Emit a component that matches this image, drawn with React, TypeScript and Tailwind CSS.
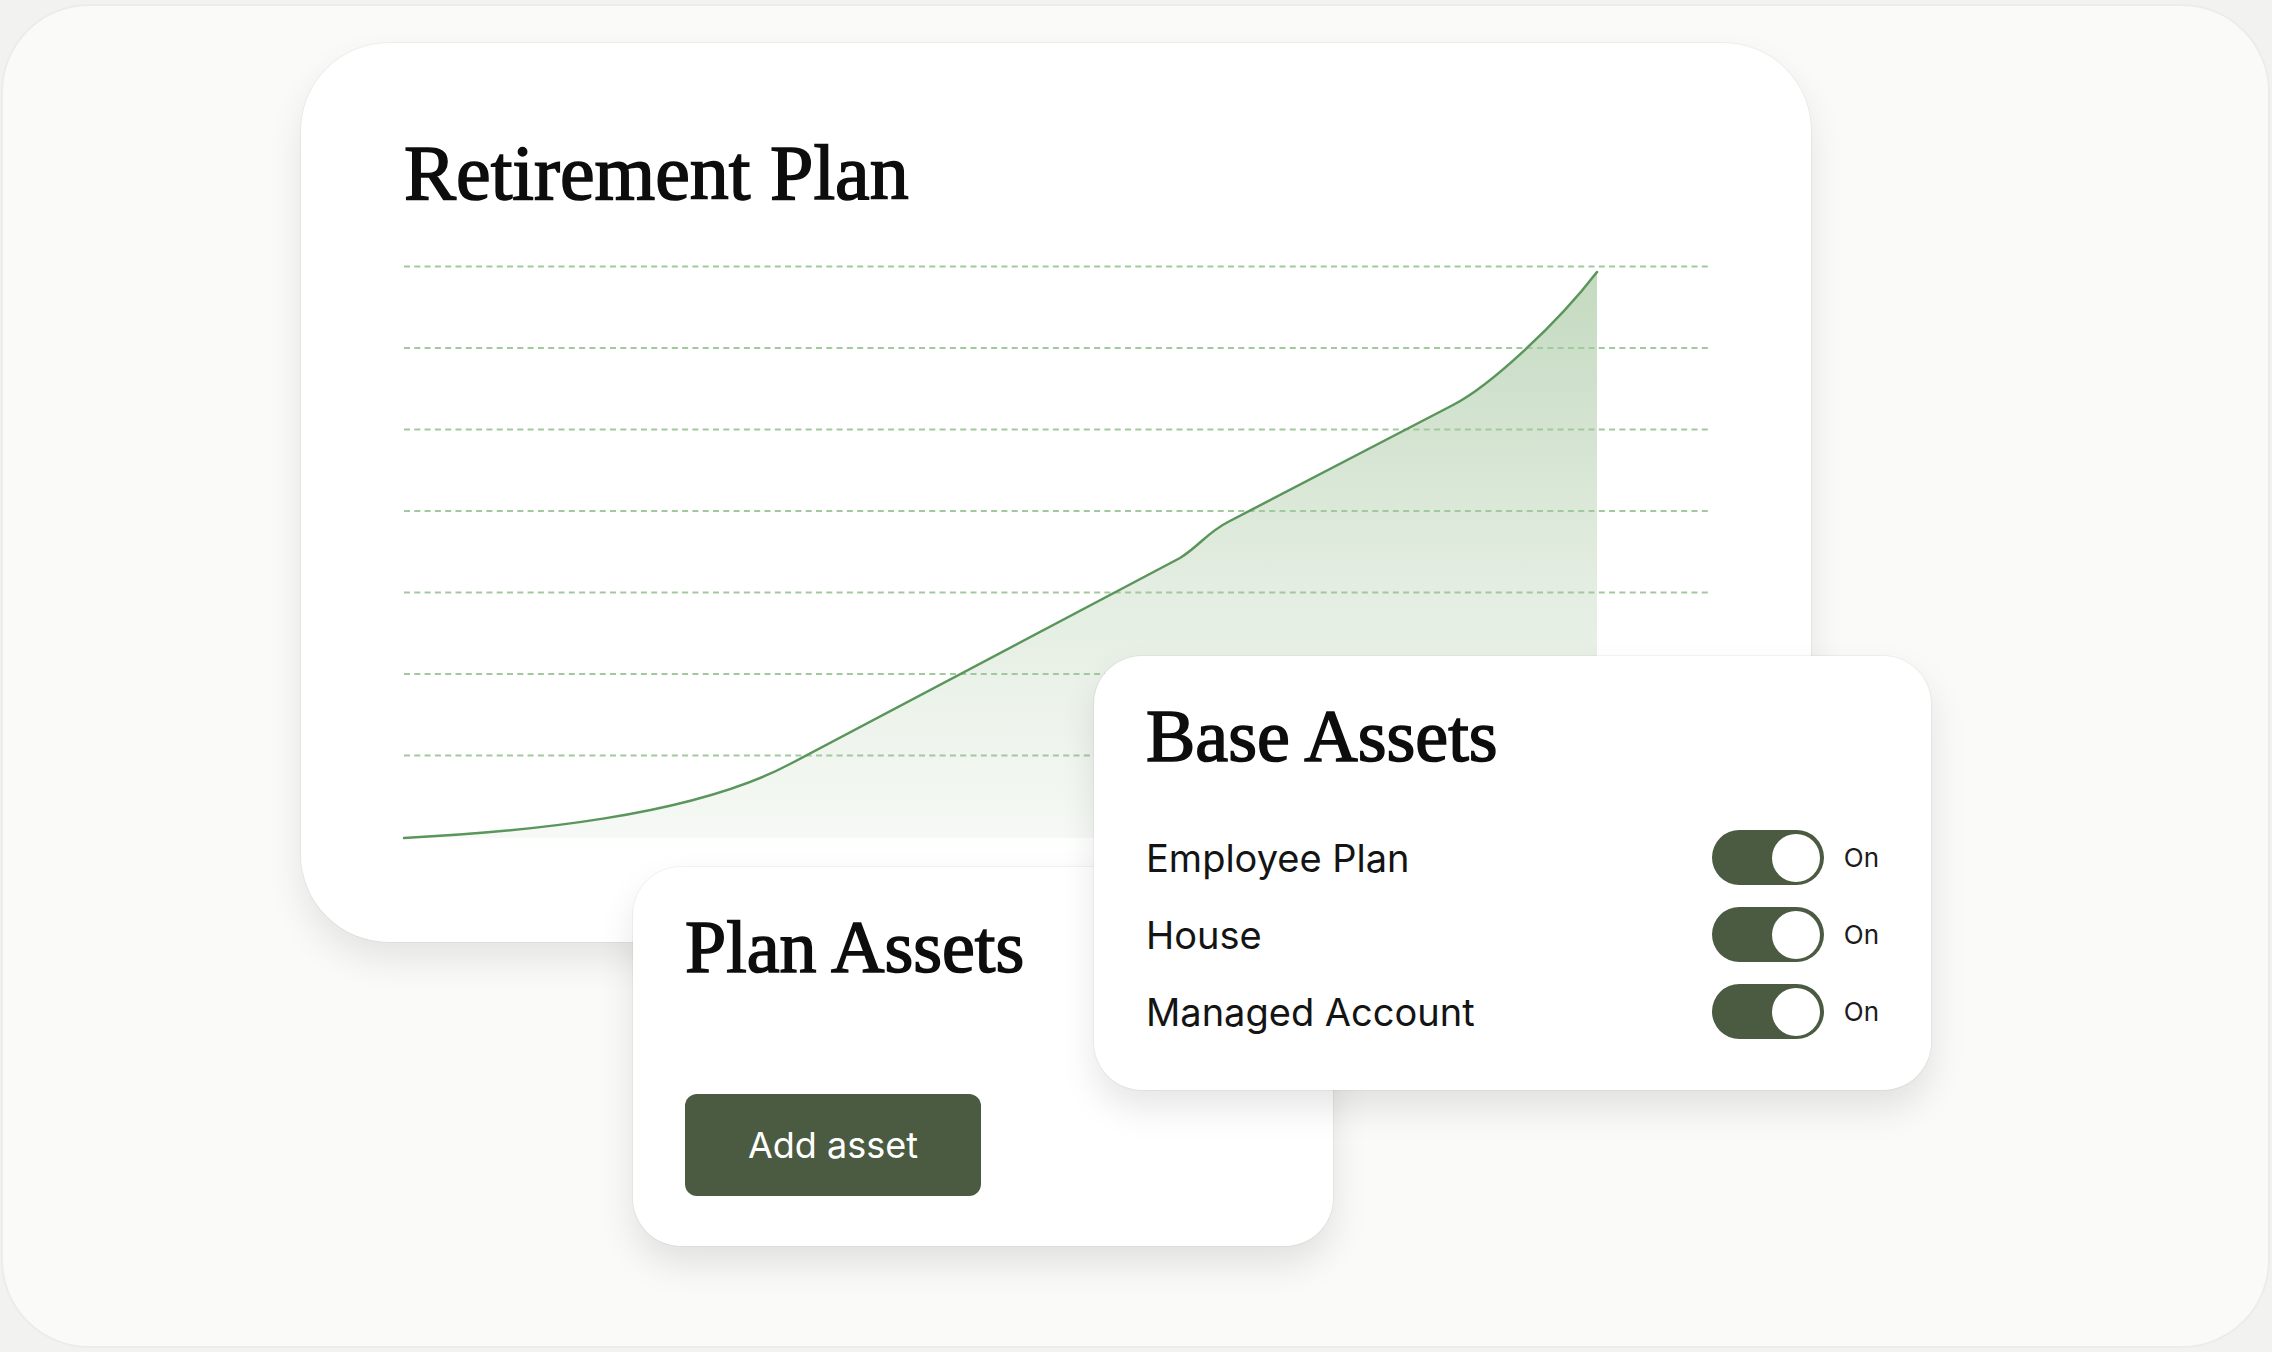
const serif = "font-['Liberation_Serif','Times_New_Roman',serif] [-webkit-text-stroke:1.6px_#0d0d0d]"
const sans = "font-['Inter','Liberation_Sans',sans-serif]"

// horizontal guide rows of the growth chart
const gridRows = [266.5, 348, 429.5, 511, 592.5, 674, 755.5]

const curve =
  'M404,838 C520,832 690,817 790,764 L1180,558 C1198,547 1208,532 1228,522 L1453,405 C1490,386 1557,324 1597,272'

function GrowthChart() {
  return (
    <svg
      className="mt-[50px] block overflow-visible"
      width={1306}
      height={580}
      viewBox="404 262 1306 580"
      fill="none"
    >
      <defs>
        <linearGradient id="growthFill" x1="0" y1="272" x2="0" y2="838" gradientUnits="userSpaceOnUse">
          <stop offset="0" stopColor="#c4dac0" />
          <stop offset="0.55" stopColor="#e3ede1" />
          <stop offset="1" stopColor="#f6f9f5" />
        </linearGradient>
      </defs>
      <path d={`${curve} L1597,838 L404,838 Z`} fill="url(#growthFill)" />
      {gridRows.map((y) => (
        <line
          key={y}
          x1={404}
          x2={1710}
          y1={y}
          y2={y}
          stroke="#a2c99d"
          strokeWidth={2}
          strokeDasharray="6 4.3"
        />
      ))}
      <path d={curve} stroke="#5a955b" strokeWidth={2.5} strokeLinejoin="round" strokeLinecap="round" />
    </svg>
  )
}

function Toggle() {
  return (
    <div className="flex items-center gap-[20px]">
      <div className="flex h-[55px] w-[112px] items-center justify-end rounded-full bg-[#4a5b41] pr-[4px]">
        <div className="h-[48px] w-[48px] rounded-full bg-white" />
      </div>
      <span className={`${sans} text-[26px] leading-none text-[#1c1c1c]`}>On</span>
    </div>
  )
}

const baseAssets = ['Employee Plan', 'House', 'Managed Account']

export default function App() {
  return (
    <div className="h-[1352px] w-[2272px] bg-[#f2f2f0] pb-[4px] pl-[1px] pr-[2px] pt-[4px]">
      <div className="relative h-full overflow-hidden rounded-[88px] border-2 border-[#ececea] bg-[#fafaf8]">
        {/* Retirement plan chart card */}
        <div className="ml-[298px] mt-[37px] h-[899px] w-[1510px] rounded-[88px] bg-white pl-[103px] pt-[91px] shadow-[0_0_0_1px_rgba(0,0,0,0.04),0_18px_36px_rgba(0,0,0,0.09)]">
          <h1 className={`${serif} text-[78px] leading-none text-[#0d0d0d]`}>Retirement Plan</h1>
          <GrowthChart />
        </div>

        {/* Plan assets */}
        <div className="absolute left-[630px] top-[861px] h-[379px] w-[700px] rounded-[48px] bg-white pl-[52px] pt-[43px] shadow-[0_0_0_1px_rgba(0,0,0,0.04),0_18px_36px_rgba(0,0,0,0.1)]">
          <h2 className={`${serif} text-[74px] leading-none text-[#0d0d0d]`}>Plan Assets</h2>
          <button className={`${sans} mt-[110px] flex h-[102px] w-[296px] items-center justify-center rounded-[12px] bg-[#4a5b41] text-[36px] text-white`}>
            Add asset
          </button>
        </div>

        {/* Base assets with toggles */}
        <div className="absolute left-[1091px] top-[650px] h-[434px] w-[837px] rounded-[48px] bg-white pl-[52px] pr-[52px] pt-[43px] shadow-[0_0_0_1px_rgba(0,0,0,0.04),0_18px_36px_rgba(0,0,0,0.1)]">
          <h2 className={`${serif} text-[74px] leading-none text-[#0d0d0d]`}>Base Assets</h2>
          <div className="mt-[46px] flex flex-col">
            {baseAssets.map((name) => (
              <div key={name} className="flex h-[77px] items-center justify-between">
                <span className={`${sans} text-[38px] leading-none text-[#141414]`}>{name}</span>
                <Toggle />
              </div>
            ))}
          </div>
        </div>
      </div>
    </div>
  )
}
